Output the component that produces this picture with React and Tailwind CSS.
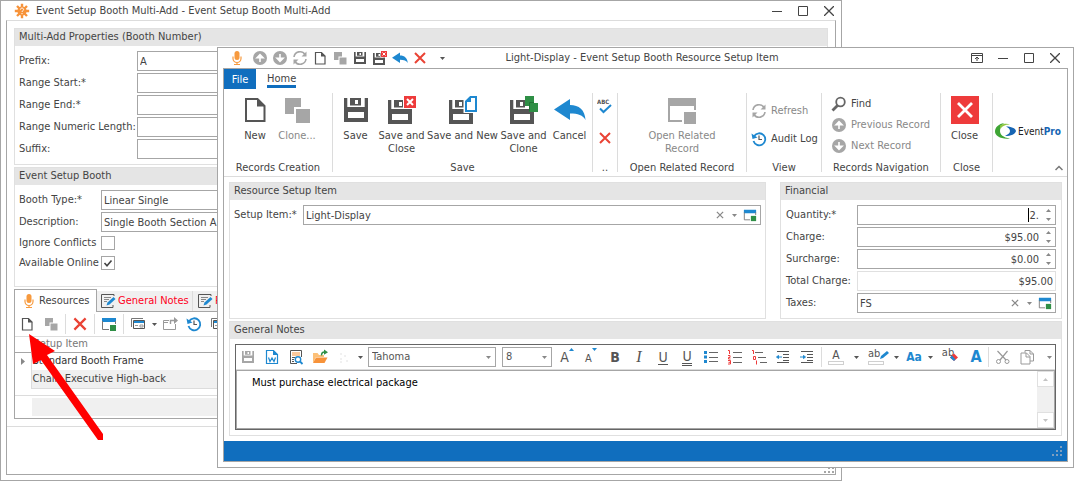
import { useState } from "react";

const Svg = ({ s = 16, vb = 16, children, className = "" }) => (
  <svg width={s} height={s} viewBox={`0 0 ${vb} ${vb}`} fill="none" className={`shrink-0 ${className}`}>
    {children}
  </svg>
);

/* ---------- icons ---------- */
const Mic = () => (
  <Svg>
    <rect x="5.5" y="1" width="5" height="9" rx="2.5" fill="#f79a3e" />
    <path d="M4 6.5v2a4 4 0 0 0 8 0v-2M8 12.5v2M5 14.5h6" stroke="#f79a3e" strokeWidth="1.2" />
  </Svg>
);
const Gear = () => (
  <Svg>
    <circle cx="8" cy="8" r="4.6" fill="#f7933a" />
    <path d="M8 .8v14.4M.8 8h14.4M3 3l10 10M13 3L3 13" stroke="#f7933a" strokeWidth="2.4" />
    <path d="M6.4 6.6c0-2 3.2-2 3.2 0C9.6 7.8 8 7.6 8 9M8 10v1.2" stroke="#fff" />
  </Svg>
);
const CircleArrow = ({ down }) => (
  <Svg>
    <circle cx="8" cy="8" r="7" fill="#a6a6a6" />
    <path d={down ? "M8 4v5.5M5 8.3L8 11.3 11 8.3z" : "M8 12V6.5M5 7.7L8 4.700 11 7.7z"} stroke="#fff" strokeWidth="1.6" fill="#fff" />
  </Svg>
);
const Refresh = () => (
  <Svg>
    <path d="M2 7a6 6 0 0 1 11-2.500M14 9a6 6 0 0 1-11 2.500" stroke="#a6a6a6" strokeWidth="1.6" />
    <path d="M14.500 1.500v5H9.500zM1.500 14.500v-5H6.500z" fill="#a6a6a6" />
  </Svg>
);
const Doc = ({ s = 16 }) => (
  <Svg s={s}>
    <path d="M3.500 2.500h6l3.500 3.500v8H3.500z" stroke="#555" strokeWidth="1.2" />
    <path d="M9 2v4.500h4.500z" fill="#555" />
  </Svg>
);
const BigDoc = () => (
  <Svg s={28} vb={28}>
    <path d="M5 3h11.500l7 7v15H5z" stroke="#555" strokeWidth="2" />
    <path d="M16 2.500V10.500h8z" fill="#555" />
  </Svg>
);
const Clone = ({ s = 16, c = "#a6a6a6" }) => (
  <Svg s={s}>
    <path d="M2 2h8v4.500H6.500V10H2z" fill={c} />
    <path d="M7.500 7.500h7v7h-7z" fill={c} />
  </Svg>
);
const Save = ({ s = 28, c = "#555" }) => (
  <Svg s={s} vb={28}>
    <g transform="translate(2 0)">
      <path fillRule="evenodd" fill={c} d="M0 2h3.300v9h17.400V2H24v24H0zM4 16v6h16v-6z" />
      <path fillRule="evenodd" fill={c} d="M6 2h11v7.600H6zM11 4v4h3V4z" />
    </g>
  </Svg>
);
const SaveClose = ({ s = 28 }) => (
  <Svg s={s} vb={28}>
    <path fillRule="evenodd" fill="#555" d="M0 4h3.300v9h17.400V4H24v24H0zM4 18v6h16v-6z" />
    <path fillRule="evenodd" fill="#555" d="M6 4h11v7.600H6zM11 6v4h3V6z" />
    <path d="M15 0h13v13H15z" fill="#fff" />
    <path d="M16 0h12v12H16z" fill="#ee3b3b" />
    <path d="M19 3l6 6M25 3l-6 6" stroke="#fff" strokeWidth="2" />
  </Svg>
);
const SaveNew = () => (
  <Svg s={28} vb={28}>
    <path fillRule="evenodd" fill="#555" d="M0 4h3.300v9h17.400V4H24v24H0zM4 18v6h16v-6z" />
    <path fillRule="evenodd" fill="#555" d="M6 4h9v7.600H6zM10 6v4h3V6z" />
    <path d="M14.500 0H28v17H14.500z" fill="#fff" />
    <path d="M17 5.500L21.500 1H27v14H17z" stroke="#1e88d0" strokeWidth="2" fill="#fff" />
    <path d="M16 6L22 0v6z" fill="#1e88d0" />
  </Svg>
);
const SaveClone = () => (
  <Svg s={28} vb={28}>
    <path fillRule="evenodd" fill="#555" d="M0 4h3.300v9h17.400V4H24v24H0zM4 18v6h16v-6z" />
    <path fillRule="evenodd" fill="#555" d="M6 4h9v7.600H6zM10 6v4h3V6z" />
    <path d="M15 0h9v7h5v9H19v-6h-4z" fill="#2f8f46" />
    <path d="M19.500 15.500v-9H24" stroke="#227336" strokeWidth="1" />
  </Svg>
);
const Undo = ({ s = 16, w = 16 }) => (
  <svg width={w} height={s} viewBox="0 0 32 28" className="shrink-0">
    <path d="M0 13.500L16 3v6c9 0 15 5 15.500 15C29 19 24 17.500 16 17.500V24z" fill="#1e88d0" />
  </svg>
);
const Cross = ({ s = 16, c = "#ea4335", w = 2 }) => (
  <Svg s={s}>
    <path d="M3 3l10 10M13 3L3 13" stroke={c} strokeWidth={w} />
  </Svg>
);
const WindowIcon = ({ s = 16, top = "#1e88d0", line = "#777", box = "#2f8f46" }) => (
  <Svg s={s}>
    <path d="M1 2h14v4H1z" fill={top} />
    <path d="M1.500 5v8.500H8M14.500 5v3" stroke={line} />
    <path d="M9 9h6v6H9z" fill={box} />
  </Svg>
);
const Cards = () => (
  <Svg>
    <path d="M1.500 11V2.500H13" stroke="#777" />
    <path d="M3.500 4.500h11v8h-11z" stroke="#555" />
    <path d="M4 5h10v2H4z" fill="#1e88d0" />
    <path d="M10 9h3v2h-3zM5 9.500h3" stroke="#999" />
  </Svg>
);
const ExportBox = () => (
  <Svg>
    <path d="M7 4.500H1.500v9h12V8M1.500 6.500H6" stroke="#999" />
    <path d="M8.500 8V4.500H13" stroke="#999" strokeWidth="1.400" />
    <path d="M12 1l4 3.500L12 8z" fill="#999" />
  </Svg>
);
const History = () => (
  <Svg>
    <path d="M3.200 5A6 6 0 1 1 2.500 10" stroke="#1e88d0" strokeWidth="1.800" />
    <path d="M.5 2.500L1.500 8l5-1.500z" fill="#1e88d0" />
    <path d="M8 4.500V8.500h3" stroke="#555" strokeWidth="1.200" />
  </Svg>
);
const NoteEdit = () => (
  <Svg>
    <path d="M14 3V1.500H1.500v13H13V12" stroke="#555" />
    <path d="M4 4.500h7M4 6.500h5M4 8.500h3" stroke="#888" />
    <path d="M6.500 12.500l1-3L13.500 4l2 2-6 5.500z" fill="#1e88d0" />
  </Svg>
);
const Magnifier = () => (
  <Svg>
    <circle cx="9.500" cy="6" r="4.300" stroke="#666" strokeWidth="1.800" />
    <path d="M6.500 9.500L1.500 14.500" stroke="#666" strokeWidth="2.800" />
  </Svg>
);
const SpellCheck = () => (
  <Svg>
    <text x="0" y="5" fontSize="6" fontWeight="700" fill="#555">ABC</text>
    <path d="M3 9.500l3.500 3.500L14 6" stroke="#1e88d0" strokeWidth="2" />
  </Svg>
);
const WordDoc = () => (
  <Svg>
    <path d="M2.500 1.500h7l4 4v9h-11z" stroke="#1e88d0" strokeWidth="1.200" />
    <path d="M9 1v5h5z" fill="#1e88d0" />
    <path d="M4.500 8.500l1.500 4 2-3.500 2 3.500 1.500-4" stroke="#1e88d0" strokeWidth="1.200" />
  </Svg>
);
const Preview = () => (
  <Svg>
    <path d="M9 14.500H2.500v-13h11V8" stroke="#555" />
    <path d="M4 4h8M4 6h8" stroke="#f7933a" strokeWidth="1.200" />
    <path d="M4 8.500h3M4 10.500h2M4 12.500h2" stroke="#555" />
    <circle cx="10" cy="10.500" r="2.700" stroke="#1e88d0" strokeWidth="1.400" />
    <path d="M12 12.500l2.500 2.500" stroke="#1e88d0" strokeWidth="1.800" />
  </Svg>
);
const Folder = () => (
  <Svg>
    <path d="M1 14V4h4.500l1.500 2h5v2H4z" fill="#fcc078" />
    <path d="M4 8.500h11.500L12.500 14H1z" fill="#f7933a" />
    <path d="M9.500 6.500c0-3 1-3.500 3-3.500" stroke="#2f8f46" strokeWidth="1.500" />
    <path d="M12 .5l4 2.700-4 2.500z" fill="#2f8f46" />
  </Svg>
);
const Faint = () => (
  <Svg>
    <path d="M5 4v2M5 9v2M9 6v2M11 11v2M4 13h2" stroke="#e2e2e2" />
  </Svg>
);
const ListIcon = ({ kind }) => (
  <Svg>
    {kind === "bullet" && (
      <>
        <path d="M6 3.500h9M6 8.500h9M6 12.500h9" stroke="#666" />
        <path d="M1 2h3v3H1zM1 6.500h3v3H1zM1 11h3v3H1z" fill="#1e88d0" />
      </>
    )}
    {kind === "number" && (
      <>
        <path d="M6 3.500h9M6 8.500h9M6 13.500h9" stroke="#666" />
        <path d="M1 1.500h1.500v3.500M1 6.500h2v2H1.500v1.500h2M1 11.500h2.500v3.500H1M1.500 13.300h2" stroke="#ee3b3b" />
      </>
    )}
    {kind === "multi" && (
      <>
        <path d="M4 3.500h8M7 8.500h8M9 13.500h7" stroke="#666" />
        <path d="M1 1.500h1.500v3.500M2.500 7.500h2v3h-2zM5.500 11.500v4" stroke="#ee3b3b" />
      </>
    )}
  </Svg>
);
const Indent = ({ out }) => (
  <Svg>
    <path d="M2 2.500h12M8 5.500h6M8 8.500h6M8 11.500h6M2 13.500h12" stroke="#555" />
    <path d={out ? "M1 8h4M4.500 6.500L6.500 8l-2 1.500z" : "M3 8h4M3.500 6.500L1.500 8l2 1.500z"} stroke="#1e88d0" fill="#1e88d0" />
  </Svg>
);
const Scissors = () => (
  <Svg>
    <path d="M2.500 2l8.500 9M12.500 2L5 11" stroke="#999" strokeWidth="1.200" />
    <circle cx="3.500" cy="12.500" r="2" stroke="#999" />
    <circle cx="12" cy="12.500" r="2" stroke="#999" />
  </Svg>
);
const CopyIcon = () => (
  <Svg>
    <path d="M6 3.500V1.500h5l3.500 3.500v7H11" stroke="#999" />
    <path d="M2 4h5.500L11 7.500V15H2z" stroke="#999" />
    <path d="M7 4v4h4M11 1.500V5h3.500" stroke="#999" />
  </Svg>
);
const Down = ({ c = "#555" }) => (
  <svg width="5" height="3" viewBox="0 0 5 3" className="shrink-0">
    <path d="M0 0h5L2.500 3z" fill={c} />
  </svg>
);
const Grip = ({ c }) => (
  <svg width="12" height="12" viewBox="0 0 12 12">
    <path d="M9 1h2v2H9zM5 5h2v2H5zM9 5h2v2H9zM1 9h2v2H1zM5 9h2v2H5zM9 9h2v2H9z" fill={c} />
  </svg>
);
const Logo = () => (
  <svg width="70" height="18" viewBox="0 0 70 18" className="shrink-0">
    <path d="M9 0C4 1 0 4 0 8.500 0 13 6 16.500 15 15.500 8 14.500 5 11.500 5 8 5 5 6.500 2 9 0z" fill="#3fa535" />
    <path d="M5 2.500C8 .5 12 0 15 1.500 10 1.500 7 3 5.500 6z" fill="#8cc63f" />
    <path d="M11 3.500c5 0 9.500 1.500 10 4.500-.5 3-5 5-11 5 3-1.500 5-3 5-5 0-1.500-1.500-3.500-4-4.500z" fill="#1765b3" />
    <text x="23" y="12" fontSize="10" fill="#222">
      Event<tspan fontWeight="700" fill="#1765b3">Pro</tspan>
    </text>
  </svg>
);

/* ---------- shared parts ---------- */
function WindowButtons({ pin }) {
  return (
    <div className="flex items-center">
      {pin && (
        <button aria-label="Pin" className="flex w-[26px] justify-center">
          <Svg s={12} vb={12}>
            <path d="M.5 1.500h11v9H.5zM.5 3.500h11M6 9V5M4 7l2-2 2 2" stroke="#444" />
          </Svg>
        </button>
      )}
      <button aria-label="Minimize" className="flex w-[26px] justify-center">
        <Svg s={10} vb={10}><path d="M0 5.500h10" stroke="#444" /></Svg>
      </button>
      <button aria-label="Maximize" className="flex w-[26px] justify-center">
        <Svg s={10} vb={10}><path d="M.5 .5h9v9h-9z" stroke="#444" /></Svg>
      </button>
      <button aria-label="Close window" className="flex w-[26px] justify-center">
        <Svg s={10} vb={10}><path d="M0 0l10 10M10 0L0 10" stroke="#444" strokeWidth="1.300" /></Svg>
      </button>
    </div>
  );
}

function Group({ title, className = "", children }) {
  return (
    <section className={`border border-[#e0e0e0] bg-white ${className}`}>
      <h2 className="h-[17px] bg-[#e5e5e5] px-1 leading-4">{title}</h2>
      {children}
    </section>
  );
}

function Field({ id, label, labelClass, value, children, align = "", box = "border-[#a6a6a6]" }) {
  const [val, setVal] = useState(value);
  return (
    <div className="flex items-center">
      <label htmlFor={id} className={`shrink-0 whitespace-nowrap ${labelClass}`}>{label}</label>
      <div className={`relative flex h-5 min-w-0 flex-1 items-center border bg-white ${box}`}>
        <input
          id={id}
          value={val}
          onChange={(e) => setVal(e.target.value)}
          className={`h-full w-full min-w-0 px-[2px] outline-none ${align}`}
        />
        {children}
      </div>
    </div>
  );
}

function Spinner() {
  return (
    <div className="flex w-[14px] shrink-0 flex-col items-center gap-[6px]">
      <button aria-label="Increase" className="rotate-180"><Down c="#888" /></button>
      <button aria-label="Decrease"><Down c="#888" /></button>
    </div>
  );
}

function LookupButtons() {
  return (
    <div className="flex shrink-0 items-center gap-[3px] pr-[3px]">
      <button aria-label="Clear"><Cross s={10} c="#888" w={2} /></button>
      <button aria-label="Open list" className="flex w-3 justify-center"><Down c="#888" /></button>
      <button aria-label="Open record"><WindowIcon s={14} /></button>
    </div>
  );
}

const Sep = ({ className = "" }) => <div className={`w-px shrink-0 bg-[#dcdcdc] ${className}`} />;

function Tool({ label, className = "w-6", children }) {
  return (
    <button aria-label={label} className={`flex h-5 shrink-0 items-center justify-center ${className}`}>
      {children}
    </button>
  );
}

/* ---------- booth window (behind) ---------- */
function BoothWindow() {
  const [ignore, setIgnore] = useState(false);
  const [online, setOnline] = useState(true);

  return (
    <div className="col-start-1 row-start-1 mr-[232px] flex min-w-0 flex-col overflow-hidden border border-[#a6a6a6] bg-white px-[5px] pb-[5px]">
      <header className="-mr-[6px] flex h-[19px] shrink-0 items-center pl-2">
        <Gear />
        <h1 className="flex-1 whitespace-nowrap pl-[6px]">Event Setup Booth Multi-Add - Event Setup Booth Multi-Add</h1>
        <WindowButtons />
      </header>

      <div className="flex flex-1 flex-col border border-[#a6a6a6] border-t-[#dcdcdc]">
        <div className="flex flex-col gap-[2px] border-b border-[#dcdcdc] px-[7px] pt-[7px] pb-[7px]">
          <Group title="Multi-Add Properties (Booth Number)">
            <div className="flex flex-col gap-[2px] px-1 py-[5px]">
              <Field id="prefix" label="Prefix:" labelClass="w-[118px]" value="A" />
              <Field id="start" label="Range Start:*" labelClass="w-[118px]" value="" />
              <Field id="end" label="Range End:*" labelClass="w-[118px]" value="" />
              <Field id="length" label="Range Numeric Length:" labelClass="w-[118px]" value="" />
              <Field id="suffix" label="Suffix:" labelClass="w-[118px]" value="" />
            </div>
          </Group>

          <Group title="Event Setup Booth">
            <div className="flex flex-col gap-[2px] px-1 pt-[5px] pb-4">
              <Field id="type" label="Booth Type:*" labelClass="w-[82px]" value="Linear Single" />
              <Field id="description" label="Description:" labelClass="w-[82px]" value="Single Booth Section A" />
              <div className="flex flex-col gap-[6px] pt-[2px]">
                <Check id="ignore" label="Ignore Conflicts" checked={ignore} onChange={setIgnore} />
                <Check id="online" label="Available Online" checked={online} onChange={setOnline} />
              </div>
            </div>
          </Group>

          <div>
            <div className="flex h-[22px] items-end">
              <button className="relative z-10 -mb-px flex h-[23px] w-[83px] shrink-0 items-center gap-[2px] border border-b-0 border-[#a6a6a6] bg-white pl-[6px]">
                <Mic />Resources
              </button>
              <button className="flex h-5 w-24 shrink-0 items-center gap-[2px] border-r border-[#dcdcdc] bg-[#f0f0f0] pl-[3px] whitespace-nowrap text-[#ff0022]">
                <NoteEdit />General Notes
              </button>
              <button className="flex h-5 w-24 shrink-0 items-center gap-[2px] border-r border-[#dcdcdc] bg-[#f0f0f0] pl-1 whitespace-nowrap text-[#ff0022]">
                <NoteEdit />Private Notes
              </button>
            </div>
            <div className="border border-[#a6a6a6]">
              <div className="flex h-[25px] items-center border-b border-[#dcdcdc]">
                <Tool label="New"><Doc /></Tool>
                <Tool label="Clone"><Clone /></Tool>
                <Sep className="mx-[2px] h-5" />
                <Tool label="Delete"><Cross s={18} /></Tool>
                <Sep className="mx-[2px] h-5" />
                <Tool label="Open"><WindowIcon /></Tool>
                <Sep className="mx-[2px] h-5" />
                <Tool label="Cards"><Cards /></Tool>
                <Tool label="Card options" className="w-2"><Down /></Tool>
                <Tool label="Export" className="w-6"><ExportBox /></Tool>
                <Tool label="History"><History /></Tool>
                <Tool label="View"><Cards /></Tool>
              </div>
              <table className="w-full border-collapse text-left">
                <thead>
                  <tr className="h-[15px] border-b border-[#a6a6a6] leading-3 text-[#777]">
                    <th className="w-4 border-r border-[#dcdcdc] p-0" />
                    <th className="p-0 pl-[2px] font-normal">Setup Item</th>
                  </tr>
                </thead>
                <tbody>
                  <tr className="h-[18px] text-[#333]">
                    <td className="border-r border-[#dcdcdc] p-0 pl-[6px]">
                      <svg width="4" height="7" viewBox="0 0 4 7"><path d="M0 0v7l4-3.500z" fill="#888" /></svg>
                    </td>
                    <td className="p-0 pl-px">Standard Booth Frame</td>
                  </tr>
                  <tr className="h-[18px]">
                    <td className="border-r border-[#dcdcdc] p-0" />
                    <td className="border-b border-[#dcdcdc] bg-[#f0f0f0] p-0 pl-px">Chair, Executive High-back</td>
                  </tr>
                </tbody>
              </table>
              <div className="mt-[6px] border-t border-[#dcdcdc] pt-[2px] pb-[2px] pl-[17px]">
                <div className="h-[18px] bg-[#f0f0f0]" />
              </div>
            </div>
          </div>
        </div>
        <div className="flex flex-1 items-end justify-end">
          <Grip c="#a6a6a6" />
        </div>
      </div>
    </div>
  );
}

function Check({ id, label, checked, onChange }) {
  return (
    <div className="flex items-center">
      <label htmlFor={id} className="w-[82px] whitespace-nowrap leading-[14px]">{label}</label>
      <div className="relative flex">
        <input
          id={id}
          type="checkbox"
          checked={checked}
          onChange={(e) => onChange(e.target.checked)}
          className="size-[14px] appearance-none border border-[#a6a6a6] bg-white"
        />
        {checked && (
          <svg width="14" height="14" viewBox="0 0 14 14" fill="none" className="pointer-events-none absolute inset-0">
            <path d="M3.500 7l2.500 2.800L10.500 4.500" stroke="#444" strokeWidth="1.600" />
          </svg>
        )}
      </div>
    </div>
  );
}

/* ---------- ribbon ---------- */
function RibbonGroup({ caption, className, bodyClass = "", children }) {
  return (
    <div className={`flex shrink-0 flex-col border-r border-[#dcdcdc] ${className}`}>
      <div className={`flex flex-1 justify-center ${bodyClass}`}>{children}</div>
      <div className="h-[11px] text-center leading-[13px] whitespace-nowrap">{caption}</div>
    </div>
  );
}

function BigButton({ icon, label, className, muted }) {
  return (
    <button className={`flex shrink-0 flex-col items-center self-start ${muted ? "text-[#888]" : ""} ${className}`}>
      <span className="flex h-[34px] items-center">{icon}</span>
      <span className="pt-[2px] text-center leading-[13px] whitespace-pre">{label}</span>
    </button>
  );
}

function SmallButton({ icon, label, muted }) {
  return (
    <button className={`flex h-[21px] items-center gap-1 whitespace-nowrap ${muted ? "text-[#888]" : ""}`}>
      {icon}{label}
    </button>
  );
}

function Ribbon() {
  return (
    <div className="border-b border-[#dcdcdc]">
      <nav className="flex h-5">
        <button className="w-8 bg-[#106ebe] pt-[2px] text-white">File</button>
        <button className="ml-[11px] h-[19px] border-b-[3px] border-[#106ebe] pt-[3px] leading-[13px]">Home</button>
      </nav>
      <div className="flex h-[87px] pt-1 pb-1">
        <RibbonGroup caption="Records Creation" className="w-[109px]" bodyClass="pr-1">
          <BigButton icon={<BigDoc />} label="New" className="w-[42px]" />
          <BigButton icon={<Clone s={32} />} label="Clone..." className="w-[42px]" muted />
        </RibbonGroup>
        <RibbonGroup caption="Save" className="w-[260px]">
          <BigButton icon={<Save />} label="Save" className="w-11" />
          <BigButton icon={<SaveClose />} label={"Save and\nClose"} className="w-12" />
          <BigButton icon={<SaveNew />} label="Save and New" className="w-[74px]" />
          <BigButton icon={<SaveClone />} label={"Save and\nClone"} className="w-12" />
          <BigButton icon={<Undo s={28} w={32} />} label="Cancel" className="w-11" />
        </RibbonGroup>
        <RibbonGroup caption=".." className="w-[25px]">
          <div className="flex flex-col gap-[15px] pt-[6px]">
            <button aria-label="Spell check"><SpellCheck /></button>
            <button aria-label="Delete"><Cross /></button>
          </div>
        </RibbonGroup>
        <RibbonGroup caption="Open Related Record" className="w-[129px]">
          <BigButton icon={<WindowIcon s={32} top="#a6a6a6" line="#a6a6a6" box="#a6a6a6" />} label={"Open Related\nRecord"} className="w-24" muted />
        </RibbonGroup>
        <RibbonGroup caption="View" className="w-[75px]">
          <div className="flex flex-1 flex-col gap-[7px] pt-[7px] pl-1">
            <SmallButton icon={<Refresh />} label="Refresh" muted />
            <SmallButton icon={<History />} label="Audit Log" />
          </div>
        </RibbonGroup>
        <RibbonGroup caption="Records Navigation" className="w-[119px]">
          <div className="flex flex-1 flex-col pl-[9px]">
            <SmallButton icon={<Magnifier />} label="Find" />
            <SmallButton icon={<CircleArrow />} label="Previous Record" muted />
            <SmallButton icon={<CircleArrow down />} label="Next Record" muted />
          </div>
        </RibbonGroup>
        <RibbonGroup caption="Close" className="w-[52px]" bodyClass="pr-1">
          <BigButton
            icon={
              <Svg s={28} vb={28}>
                <path d="M0 0h28v28H0z" fill="#ee3b3b" />
                <path d="M7 7l14 14M21 7L7 21" stroke="#fff" strokeWidth="2.800" />
              </Svg>
            }
            label="Close"
            className="w-12"
          />
        </RibbonGroup>
        <div className="flex min-w-0 flex-1 flex-col justify-between pt-[30px] pl-[2px]">
          <Logo />
          <button aria-label="Collapse ribbon" className="self-end pr-1">
            <Svg s={8} vb={8}><path d="M.5 6L4 2.500 7.500 6" stroke="#777" strokeWidth="1.500" /></Svg>
          </button>
        </div>
      </div>
    </div>
  );
}

/* ---------- notes editor ---------- */
function Picker({ label, value, options, className }) {
  const [val, setVal] = useState(value);
  return (
    <div className={`relative flex h-5 shrink-0 items-center border border-[#a6a6a6] ${className}`}>
      <select
        aria-label={label}
        value={val}
        onChange={(e) => setVal(e.target.value)}
        className="h-full w-full appearance-none bg-transparent pl-[3px] outline-none"
      >
        {options.map((o) => <option key={o}>{o}</option>)}
      </select>
      <span className="pointer-events-none absolute right-1 flex"><Down c="#888" /></span>
    </div>
  );
}

function NotesEditor() {
  const [notes, setNotes] = useState("Must purchase electrical package");
  return (
    <div className="m-[5px] border border-[#666]">
      <div className="flex h-[25px] items-center overflow-hidden border-b border-[#dcdcdc] text-[#555]">
        <Tool label="Save notes"><Save s={14} c="#a6a6a6" /></Tool>
        <Tool label="Word"><WordDoc /></Tool>
        <Tool label="Preview"><Preview /></Tool>
        <Tool label="Open file"><Folder /></Tool>
        <Tool label="Paste"><Faint /></Tool>
        <Tool label="Paste options" className="w-3 pr-1"><Down /></Tool>
        <Picker label="Font" value="Tahoma" options={["Tahoma", "Arial", "Verdana"]} className="w-32" />
        <Picker label="Size" value="8" options={["8", "9", "10", "12"]} className="mr-[3px] ml-[6px] w-[50px]" />
        <Tool label="Grow font">
          <span className="text-sm font-medium">A</span>
          <Svg s={5} vb={5} className="self-start"><path d="M0 4L2.500 1 5 4z" fill="#1e88d0" /></Svg>
        </Tool>
        <Tool label="Shrink font">
          <span className="pt-1 text-[11px] font-medium">A</span>
          <Svg s={5} vb={5} className="self-start"><path d="M0 1h5L2.500 4z" fill="#1e88d0" /></Svg>
        </Tool>
        <Tool label="Bold"><b className="text-sm">B</b></Tool>
        <Tool label="Italic"><i className="font-['Liberation_Serif',serif] text-base">I</i></Tool>
        <Tool label="Underline"><span className="border-b border-[#555] text-sm leading-[14px] font-medium">U</span></Tool>
        <Tool label="Double underline"><span className="border-b-[3px] border-double border-[#555] text-sm leading-[14px] font-medium">U</span></Tool>
        <Tool label="Bullets"><ListIcon kind="bullet" /></Tool>
        <Tool label="Numbering"><ListIcon kind="number" /></Tool>
        <Tool label="Multilevel list"><ListIcon kind="multi" /></Tool>
        <Tool label="Decrease indent"><Indent /></Tool>
        <Tool label="Increase indent"><Indent out /></Tool>
        <Sep className="ml-[2px] h-5" />
        <Tool label="Font color" className="w-7">
          <span className="flex w-4 flex-col items-center">
            <span className="text-xs leading-3 font-medium">A</span>
            <span className="h-1 w-full border border-[#d0d0d0]" />
          </span>
        </Tool>
        <Tool label="Font color options" className="w-3"><Down /></Tool>
        <Tool label="Highlight" className="w-7">
          <span className="flex w-4 flex-col">
            <span className="flex leading-[10px]">ab
              <Svg s={10} vb={10}><path d="M0 10l1-3 6-5 2 2-6 5z" fill="#1e88d0" /></Svg>
            </span>
            <span className="mt-[2px] h-1 w-full border border-[#d0d0d0]" />
          </span>
        </Tool>
        <Tool label="Highlight options" className="w-3"><Down /></Tool>
        <Tool label="Change case"><span className="text-xs font-bold text-[#1e88d0]">Aa</span></Tool>
        <Tool label="Case options" className="w-2"><Down /></Tool>
        <Tool label="Clear formatting" className="w-8">
          <span className="self-start leading-3">ab</span>
          <Svg s={8} vb={8} className="-ml-1 self-center">
            <path d="M0 4.500L4 .5 8 4.500 4 8z" fill="#ee3b3b" />
            <path d="M0 4.500L2 2.500 5.500 6.500 4 8z" fill="#1e88d0" />
          </Svg>
        </Tool>
        <Tool label="Font dialog" className="w-5"><b className="text-base text-[#1e88d0]">A</b></Tool>
        <Sep className="mx-[2px] h-5" />
        <Tool label="Cut"><Scissors /></Tool>
        <Tool label="Copy"><CopyIcon /></Tool>
        <Tool label="More" className="ml-auto w-3"><Down c="#888" /></Tool>
      </div>
      <div className="flex h-[59px] border border-[#a6a6a6]">
        <textarea
          aria-label="General notes"
          value={notes}
          onChange={(e) => setNotes(e.target.value)}
          className="min-w-0 flex-1 resize-none px-[15px] py-1 leading-4 text-black outline-none"
        />
        <div className="flex w-[17px] flex-col justify-between bg-[#f0f0f0]">
          <button aria-label="Scroll up" className="flex h-4 items-center justify-center border border-[#e0e0e0] bg-white">
            <span className="rotate-180"><Down c="#c4c4c4" /></span>
          </button>
          <button aria-label="Scroll down" className="flex h-4 items-center justify-center border border-[#e0e0e0] bg-white">
            <Down c="#c4c4c4" />
          </button>
        </div>
      </div>
    </div>
  );
}

/* ---------- resource item window (front) ---------- */
function ItemWindow() {
  return (
    <div className="z-10 col-start-1 row-start-1 mt-[47px] mb-[13px] ml-[217px] min-w-0 self-start border border-[#a6a6a6] bg-white px-[5px] pb-[5px]">
      <header className="flex h-5 items-center">
        <div className="flex items-center gap-1 pl-[6px]">
          <Tool label="Resource" className="mr-[3px] w-4"><Mic /></Tool>
          <Tool label="Previous" className="w-4"><CircleArrow /></Tool>
          <Tool label="Next" className="w-4"><CircleArrow down /></Tool>
          <Tool label="Refresh" className="w-4"><Refresh /></Tool>
          <Tool label="New" className="w-4"><Doc /></Tool>
          <Tool label="Clone" className="w-4"><Clone /></Tool>
          <Tool label="Save" className="w-4"><Save s={14} /></Tool>
          <Tool label="Save and close" className="w-4"><SaveClose s={14} /></Tool>
          <Tool label="Undo" className="w-4"><Undo /></Tool>
          <Tool label="Delete" className="w-4"><Cross /></Tool>
          <Tool label="Customize" className="ml-1 w-3"><Down /></Tool>
        </div>
        <h1 className="flex-1 text-center whitespace-nowrap">Light-Display - Event Setup Booth Resource Setup Item</h1>
        <div className="pl-32"><WindowButtons pin /></div>
      </header>

      <div className="border border-[#a6a6a6]">
        <Ribbon />
        <main className="flex flex-col gap-[2px] px-[5px] py-[5px]">
          <div className="flex gap-[14px]">
            <Group title="Resource Setup Item" className="min-w-0 flex-1">
              <div className="px-1 py-[5px]">
                <Field id="item" label="Setup Item:*" labelClass="w-[69px]" value="Light-Display">
                  <LookupButtons />
                </Field>
              </div>
            </Group>
            <Group title="Financial" className="w-[282px]">
              <div className="flex flex-col gap-[2px] px-[5px] pt-[5px] pb-[5px]">
                <Field id="quantity" label="Quantity:*" labelClass="w-[71px]" value="2." align="text-right">
                  <span className="absolute top-[2px] right-[26px] h-[14px] w-px bg-black" />
                  <Spinner />
                </Field>
                <Field id="charge" label="Charge:" labelClass="w-[71px]" value="$95.00" align="text-right">
                  <Spinner />
                </Field>
                <Field id="surcharge" label="Surcharge:" labelClass="w-[71px]" value="$0.00" align="text-right">
                  <Spinner />
                </Field>
                <Field id="total" label="Total Charge:" labelClass="w-[71px]" value="$95.00" align="text-right" box="border-[#e0e0e0]" />
                <Field id="taxes" label="Taxes:" labelClass="w-[71px]" value="FS">
                  <LookupButtons />
                </Field>
              </div>
            </Group>
          </div>
          <Group title="General Notes">
            <NotesEditor />
          </Group>
        </main>
        <footer className="flex h-5 items-center justify-end bg-[#106ebe] pr-1">
          <Grip c="#7f9fc0" />
        </footer>
      </div>
    </div>
  );
}

export default function App() {
  return (
    <div className="relative grid min-h-screen bg-white font-['DejaVu_Sans_Condensed','DejaVu_Sans',sans-serif] text-[11px] leading-4 text-[#444]">
      <BoothWindow />
      <ItemWindow />
      {/* pointer to the New button */}
      <svg width="80" height="110" viewBox="0 0 80 110" className="pointer-events-none absolute top-[332px] left-[26px] z-20">
        <path d="M3 2l26 17-8 4 56 79v6h-5L15 28l-8 4z" fill="#f00" />
      </svg>
    </div>
  );
}
